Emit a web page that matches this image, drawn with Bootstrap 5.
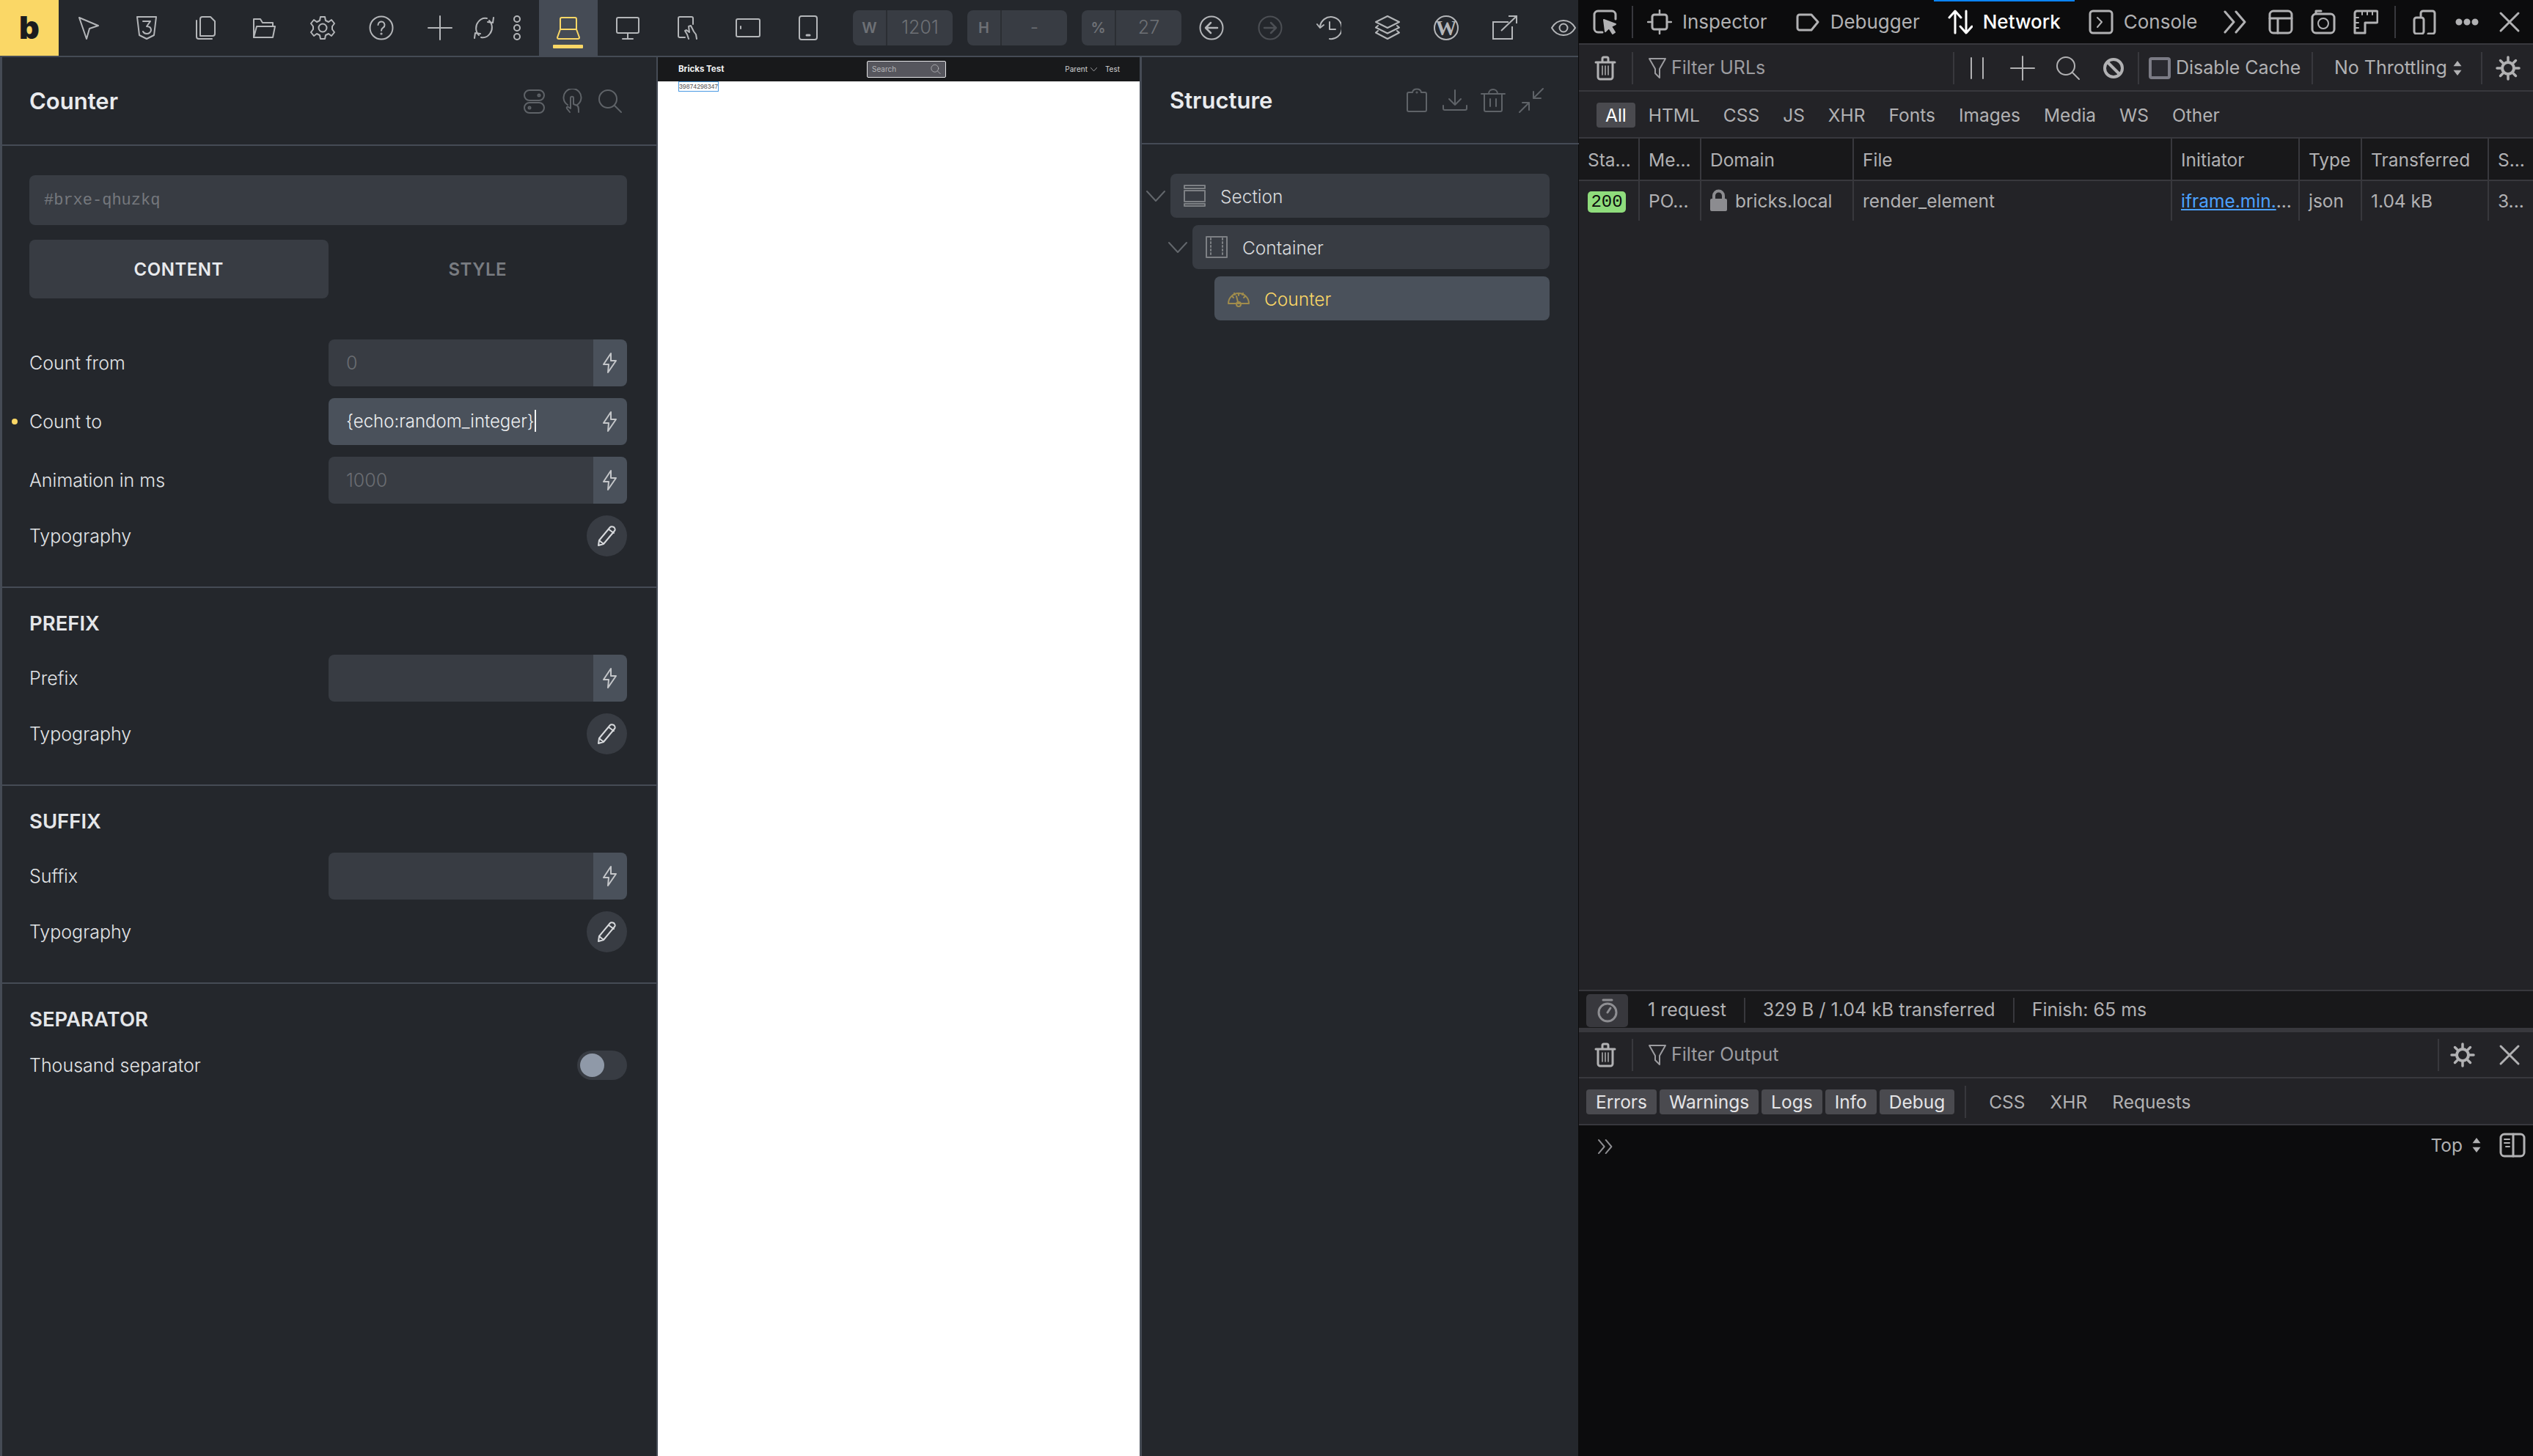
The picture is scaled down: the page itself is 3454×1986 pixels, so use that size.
<!DOCTYPE html>
<html lang="en">
<head>
<meta charset="UTF-8">
<title>Bricks builder - Counter</title>
<link href="https://cdn.jsdelivr.net/npm/bootstrap@5.3.0/dist/css/bootstrap.min.css" rel="stylesheet">
<style>
html, body { height: 100%; }
body { background: #24272c; color: #e4e6e9; font-family: Inter, "Liberation Sans", sans-serif; overflow: hidden; }
.app { width: 3454px; height: 1986px; }
.builder { width: 2153px; flex: none; border-right: 1px solid #0c0c0d; }

/* svg icons */
.ic { width: 34px; height: 34px; fill: none; stroke: currentColor; stroke-width: 2; stroke-linecap: round; stroke-linejoin: round; flex: none; display: block; }
.ic-fill { fill: currentColor; stroke: none; }

/* top bar */
.topbar { height: 78px; border-bottom: 2px solid #454b55; color: #b4b6b9; overflow: hidden; flex: none; }
.logo-box { width: 80px; height: 78px; background: #fad766; color: #1b1c1f; font: 900 43px/74px Inter, sans-serif; text-align: center; margin-bottom: -2px; flex: none; }
.tool { width: 80px; height: 76px; flex: none; }
.tool-sm { width: 40px; }
.tool-md { width: 50px; }
.tool-spacer { margin-right: 5px; }
.tool-active { background: #454b55; color: #fad766; position: relative; height: 78px; margin-bottom: -2px; }
.tool-active::after { content: ""; position: absolute; left: 19px; width: 41px; top: 61px; height: 5px; background: #fad766; border-radius: 1px; }
.tool-82 { width: 82px; }
.tool-off { color: #4c4f54; }
.size-box { width: 136px; height: 48px; background: #383c43; border-radius: 8px; margin-left: 20px; color: #6e7176; flex: none; }
.size-key { width: 47px; height: 48px; border-right: 2px solid #2b2e33; font-size: 20px; font-weight: 600; flex: none; }
.size-val { font-size: 25px; font-weight: 300; flex-grow: 1; text-align: center; }
.size-end { margin-right: 1px; }

/* builder panels */
.panel-left { width: 897px; flex: none; border-left: 3px solid #454b55; border-right: 2px solid #454b55; }
.canvas-pane { width: 657px; flex: none; background: #fff; }
.panel-right { width: 599px; flex: none; border-left: 3px solid #454b55; }
.panel-head { height: 121px; border-bottom: 2px solid #454b55; padding: 0 46px 0 37px; flex: none; }
.panel-head-r { height: 119px; padding: 0 48px 0 38px; }
.panel-title { font-size: 31px; font-weight: 600; color: #e9ebee; margin: 0; }
.head-icons { color: #5f6368; gap: 18px; }
.head-icons-r { gap: 18px; }

.sect { padding: 32px 40px 41px 37px; border-bottom: 2px solid #454b55; }
.sect-top { padding-top: 40px; }
.sect-last { border-bottom: 0; }
.sect-title { font-size: 27.5px; font-weight: 600; line-height: 32px; margin-bottom: 27px; color: #e4e6e9; }
.id-box { height: 68px; background: #383c43; border-radius: 8px; padding: 0 20px; color: #75787d; font: 22px/70px "Liberation Mono", monospace; margin-bottom: 20px; }
.tab-row { margin-bottom: 56px; }
.tab-btn { width: 408px; height: 80px; border: 0; border-radius: 8px; background: transparent; color: #797c81; font-size: 24px; font-weight: 600; letter-spacing: .5px; padding: 2px 0 0; }
.tab-on { background: #383c43; color: #e8eaed; }
.fld { min-height: 64px; margin-bottom: 16px; position: relative; }
.fld:last-child { margin-bottom: 0; }
.fld-label { font-size: 25px; font-weight: 300; color: #e2e4e7; width: 408px; flex: none; padding-top: 2px; }
.fld-dot { position: absolute; left: -24px; top: 28px; width: 8px; height: 8px; border-radius: 50%; background: #fad766; }
.fld-group { width: 407px; height: 64px; flex-wrap: nowrap; }
.fld-input, .fld-input:focus { background: #383c43; border: 0; border-radius: 8px 0 0 8px; box-shadow: none; color: #6a6d72; font-size: 25px; font-weight: 300; padding: 0 24px; height: 64px; line-height: 64px; }
.fld-input::placeholder { color: #6a6d72; opacity: 1; }
.fld-on, .fld-on:focus { background: #4a515b; color: #eceef0; white-space: nowrap; font-size: 24px; }
.caret-bar { display: inline-block; width: 2px; height: 30px; background: #f2f2f2; vertical-align: -6px; }
.fld-bolt { width: 47px; padding: 0; justify-content: center; background: #4a515b; border: 0; border-radius: 0 8px 8px 0; color: #c4c6c9; flex: none; }
.fld-bolt svg { width: 24px; height: 28px; }
.round-btn { width: 55px; height: 56px; border-radius: 50%; background: #383c43; color: #d8dadd; border: 0; padding: 0; }
.round-btn svg { width: 30px; height: 30px; }
.fld-short { min-height: 56px; }
.toggle-track { width: 68px; height: 40px; border-radius: 20px; background: #383c43; padding: 4px; }
.toggle-knob { width: 33px; height: 32px; border-radius: 50%; background: #8f99a8; }
.fld-toggle { min-height: 40px; margin: 0; }

/* canvas preview */
.site-nav { height: 33px; background: #18191b; padding: 0 27px 0 28px; color: #d4d4d6; font-size: 10px; flex: none; }
.site-brand { font-size: 11.5px; font-weight: 700; color: #f4f4f5; width: 257px; flex: none; }
.site-search { width: 108px; height: 23px; border: 1px solid #e4e4e6; border-radius: 2px; background: #56565d; padding: 0 6px; color: #b5b5b8; font-size: 10px; flex: none; }
.site-search svg { width: 14px; height: 15px; }
.site-links { font-size: 10px; gap: 11px; }
.site-links svg { width: 9px; height: 9px; }
.count-out { margin-left: 28px; width: 55px; height: 14px; border: 1px solid #4a9ae3; color: #4d4d4d; font: 8.7px/12px "Liberation Sans", sans-serif; white-space: nowrap; }

/* structure tree */
.tree { padding: 40px 40px 0 0; gap: 10px; }
.tree-line { height: 60px; }
.tree-l1 { margin-left: 30px; }
.tree-l2 { margin-left: 60px; }
.tree-chev { width: 39px; flex: none; color: #63676c; }
.tree-chev svg { width: 26px; height: 26px; margin-left: 6px; }
.tree-pill { background: #383c43; border-radius: 8px; height: 60px; flex-grow: 1; padding: 2px 18px 0; gap: 20px; font-size: 24.5px; font-weight: 300; color: #d9dbde; }
.tree-pill svg { color: #7d8084; width: 30px; height: 30px; margin-top: -2px; }
.tree-on { background: #4a515b; color: #fad766; }
.tree-on svg { color: #a08c4c; }

/* devtools */
.devtools { width: 1301px; flex: none; background: #232327; color: #b1b1b3; font-family: Inter, "Liberation Sans", sans-serif; font-size: 25px; }
.devtools .ic { width: 34px; height: 34px; }
.devtools .dt-updown { width: 12px; height: 22px; }
.devtools .dt-prompt { width: 22px; height: 22px; margin: 8px 0 0 6px; color: #8e8e92; }
.dt-tabs { height: 61px; background: #0c0c0d; border-bottom: 2px solid #38383d; flex: none; font-size: 26px; }
.dt-slot-first { width: 72px; flex: none; }
.dt-sep { width: 2px; height: 44px; background: #38383d; flex: none; }
.dt-sep-r { margin-left: 2px; }
.dt-tab { padding: 0 19px; gap: 14px; height: 59px; position: relative; }
.dt-tab-on { color: #fff; font-weight: 500; }
.dt-tab-on::before { content: ""; position: absolute; left: 0; right: 0; top: 0; height: 2px; background: #0a84ff; }
.dt-more { width: 65px; flex: none; }
.dt-58 { width: 58px; flex: none; }
.dt-tabs-end { padding-right: 3px; }
.dt-sep-m { margin: 0 10px; }
.dt-tool { height: 64px; border-bottom: 2px solid #38383d; flex: none; padding-top: 2px; }
.dt-filter { padding-left: 20px; gap: 6px; color: #9c9ca0; flex-grow: 1; }
.devtools .dt-filter svg { width: 26px; height: 30px; }
.dt-62 { width: 62px; flex: none; }
.dt-check { width: 235px; padding-left: 13px; gap: 7px; flex: none; white-space: nowrap; }
.dt-box { width: 30px; height: 30px; border: 4px solid #7b7b85; border-radius: 4px; background: #2a2a30; flex: none; }
.dt-throttle { width: 229px; padding-left: 29px; gap: 8px; flex: none; white-space: nowrap; }
.dt-gear { width: 69px; flex: none; }
.dt-types { height: 64px; border-bottom: 2px solid #38383d; padding: 2px 0 0 24px; flex: none; font-size: 24.5px; }
.dt-type { padding: 0 16px; line-height: 34px; height: 34px; border-radius: 4px; }
.dt-type-on { background: #4a4a4f; color: #fff; padding: 0 12px; margin-right: 2px; }
.dt-table { table-layout: fixed; width: 1301px; border-collapse: collapse; margin: 0; font-size: 24.5px; }
.dt-table th, .dt-table td { padding: 0 12px; border-right: 2px solid #38383d; border-bottom: 2px solid #38383d; white-space: nowrap; overflow: hidden; font-weight: 400; color: #b1b1b3; }
.dt-table th { background: #18181a; height: 57px; padding-top: 2px; }
.dt-table td { background: #232327; height: 55px; border-bottom: 0; }
.dt-table th:last-child, .dt-table td:last-child { border-right: 0; }
.c1 { width: 82px; } .c2 { width: 84px; } .c3 { width: 208px; } .c4 { width: 434px; }
.c5 { width: 174px; } .c6 { width: 85px; } .c7 { width: 173px; } .c8 { width: 61px; }
.code-200 { display: inline-block; width: 52px; height: 29px; background: #8fdc7c; color: #0c0c0d; border-radius: 5px; font: 24px/29px "Liberation Mono", monospace; text-align: center; vertical-align: middle; }
.devtools .lock-ic { width: 23px; height: 30px; vertical-align: -5px; display: inline-block; margin-right: 11px; color: #8c8c90; }
.dt-link { color: #4ba0ff; text-decoration: underline; }
.dt-net { height: 1163px; border-bottom: 2px solid #38383d; flex: none; }
.dt-status { height: 50px; background: #18181a; gap: 24px; padding: 2px 0 0 10px; flex: none; }
.dt-timer { width: 57px; height: 45px; border-radius: 5px; background: #38383d; color: #8e8e92; margin-right: 3px; }
.dt-status .dt-sep { height: 34px; }
.dt-split { height: 6px; background: #38383d; flex: none; }
.dt-con-tool { height: 63px; border-bottom: 2px solid #38383d; flex: none; padding-top: 1px; }
.dt-x { width: 64px; flex: none; }
.dt-gear-2 { width: 64px; flex: none; }
.dt-levels { height: 64px; border-bottom: 2px solid #38383d; padding: 2px 0 0 10px; gap: 4px; flex: none; font-size: 24.5px; }
.dt-level { height: 34px; line-height: 34px; padding: 0 13px; border-radius: 4px; background: #4a4a4f; color: #e4e4e6; }
.dt-levels .dt-sep { margin: 0 12px 0 10px; }
.dt-extra { padding: 0 15px; }
.dt-console { flex-grow: 1; background: #0c0c0d; padding: 10px 10px 0 19px; font-size: 24.5px; }
.dt-top { gap: 13px; line-height: 34px; }
.dt-top .dt-updown { margin-top: 6px; }
.devtools .dt-panel-ic { width: 36px; margin-left: 12px; }
</style>
</head>
<body>

<svg width="0" height="0" class="position-absolute">
  <symbol id="i-cursor" viewBox="0 0 34 34"><path d="M5 3l26 11-12 4-4 14z"/></symbol>
  <symbol id="i-css" viewBox="0 0 34 34"><path d="M4 2h26l-3 25-10 5-10-5z"/><path d="M12 8h10l-5 7c4 0 6 2 6 5s-3 5-6 5-4-1-5-3"/></symbol>
  <symbol id="i-pages" viewBox="0 0 34 34"><path d="M10 28V5a3 3 0 0 1 3-3h11l6 6v17a3 3 0 0 1-3 3z"/><path d="M5 7v22a3 3 0 0 0 3 3h18"/></symbol>
  <symbol id="i-folder" viewBox="0 0 34 34"><path d="M3 30V5h9l3 5h14v5"/><path d="M3 30l4-15h25l-3 15z"/></symbol>
  <symbol id="i-gear" viewBox="0 0 34 34"><circle cx="17" cy="17" r="5.5"/><path d="M14 2h6l1 5 4 2 4-3 4 5-3 4v4l3 4-4 5-4-3-4 2-1 5h-6l-1-5-4-2-4 3-4-5 3-4v-4l-3-4 4-5 4 3 4-2z"/></symbol>
  <symbol id="i-help" viewBox="0 0 34 34"><circle cx="17" cy="17" r="15.5"/><path d="M12.500 13a4.500 4.500 0 1 1 7 3.700c-1.500 1-2.500 2-2.500 4"/><circle cx="17" cy="25" r=".6"/></symbol>
  <symbol id="i-plus" viewBox="0 0 34 34"><path d="M17 1v32M1 17h32"/></symbol>
  <symbol id="i-sync" viewBox="0 0 34 34"><path d="M24 7c5 5 5 13 1 18-3 4-7 6-12 5"/><path d="M10 27C5 22 5 14 9 9c3-4 7-6 12-5"/><path d="M30 3l-1 7-7-1M4 31l1-7 7 1"/></symbol>
  <symbol id="i-dots" viewBox="0 0 34 34"><circle cx="17" cy="5" r="4"/><circle cx="17" cy="17" r="4"/><circle cx="17" cy="29" r="4"/></symbol>
  <symbol id="i-laptop" viewBox="0 0 34 34"><path d="M6 18V4a2 2 0 0 1 2-2h18a2 2 0 0 1 2 2v14"/><path d="M6 18h22l4 11a2 2 0 0 1-2 2H4a2 2 0 0 1-2-2z"/></symbol>
  <symbol id="i-monitor" viewBox="0 0 34 34"><rect x="2" y="3" width="30" height="21" rx="2"/><path d="M17 24v7M10 32h14"/></symbol>
  <symbol id="i-tablet-hand" viewBox="0 0 34 34"><path d="M13 30H6a2 2 0 0 1-2-2V4a2 2 0 0 1 2-2h16a2 2 0 0 1 2 2v8"/><path d="M18 32l-2-6-3-5 2-1 4 3-1-8 3-1 4 8 3 4 1 6"/></symbol>
  <symbol id="i-tablet-land" viewBox="0 0 34 34"><rect x="1" y="5" width="32" height="24" rx="2"/><path d="M7 15v3"/></symbol>
  <symbol id="i-phone" viewBox="0 0 34 34"><rect x="5" y="1" width="24" height="32" rx="3"/><path d="M15 27h4" stroke-width="3"/></symbol>
  <symbol id="i-back" viewBox="0 0 34 34"><circle cx="17" cy="17" r="15.500"/><path d="M25 17H10M16 10l-7 7 7 7" stroke-width="2.500"/></symbol>
  <symbol id="i-fwd" viewBox="0 0 34 34"><circle cx="17" cy="17" r="15.500"/><path d="M9 17h15M18 10l7 7-7 7" stroke-width="2.500"/></symbol>
  <symbol id="i-history" viewBox="0 0 34 34"><path d="M5 15a15 15 0 1 1 13 17"/><path d="M1 12l4 5 5-4"/><path d="M18 9v10h8"/></symbol>
  <symbol id="i-layers" viewBox="0 0 34 34"><path d="M17 1l16 8-16 8-16-8z"/><path d="M4 14l-3 2.500 16 8 16-8-3-2.500"/><path d="M4 21l-3 2.500 16 8.500 16-8.500-3-2.500"/></symbol>
  <symbol id="i-ext" viewBox="0 0 34 34"><path d="M22 9H1v23h26V15M12 21L33 1M22 1h11v10" stroke-linecap="butt" stroke-linejoin="miter"/></symbol>
  <symbol id="i-eye" viewBox="0 0 34 34"><path d="M1 17c4-7 10-10 16-10s12 3 16 10c-4 7-10 10-16 10S5 24 1 17z"/><circle cx="17" cy="17" r="5.500"/></symbol>
  <symbol id="i-toggles" viewBox="0 0 34 34"><rect x="4" y="2" width="27" height="14" rx="7"/><rect x="4" y="19" width="27" height="14" rx="7"/><circle cx="24" cy="9" r="1.500"/><circle cx="11" cy="26" r="1.500"/></symbol>
  <symbol id="i-touch" viewBox="0 0 34 34"><path d="M11 22a12 12 0 1 1 13 0"/><path d="M14 32l-4-5c-1-2 1-3 2-2l3 2V13c0-3 4-3 4 0v8l5 2c2 1 2 3 2 9"/></symbol>
  <symbol id="i-search" viewBox="0 0 34 34"><circle cx="14" cy="14" r="12"/><path d="M23 23l9 9"/></symbol>
  <symbol id="i-clip" viewBox="0 0 34 34"><path d="M11 6H6a2 2 0 0 0-2 2v22a2 2 0 0 0 2 2h22a2 2 0 0 0 2-2V8a2 2 0 0 0-2-2h-5c-1-6-11-6-12 0z"/><circle cx="17" cy="6" r=".6"/></symbol>
  <symbol id="i-down" viewBox="0 0 34 34"><path d="M17 3v20M9 15l8 8 8-8M1 24v4a2 2 0 0 0 2 2h28a2 2 0 0 0 2-2v-4"/></symbol>
  <symbol id="i-trash" viewBox="0 0 34 34"><path d="M1 8h32M5 8v22a2 2 0 0 0 2 2h20a2 2 0 0 0 2-2V8M11 8c0-8 12-8 12 0M13 15v10M21 15v10"/></symbol>
  <symbol id="i-collapse" viewBox="0 0 34 34"><path d="M33 1L20 14M20 5v9h10M1 33l13-13M5 20h9v10"/></symbol>
  <symbol id="i-bolt" viewBox="0 0 24 28"><path d="M13 1L3 16h7l-1 11 11-16h-7z"/></symbol>
  <symbol id="i-pen" viewBox="0 0 30 30"><path d="M4 21L19 3c1-1 3-1 5 0 2 2 2 4 1 5L10 26l-7 2zM4 21l6 5M17 6l7 5"/></symbol>
  <symbol id="i-chev" viewBox="0 0 26 26"><path d="M1 7l12 13L25 7"/></symbol>
  <symbol id="i-section" viewBox="0 0 30 30"><rect x="1" y="1" width="28" height="4"/><rect x="1" y="8" width="28" height="15"/><rect x="1" y="26" width="28" height="3"/></symbol>
  <symbol id="i-container" viewBox="0 0 30 30"><rect x="1" y="1" width="28" height="28"/><path d="M7 3v25M23 3v25" stroke-dasharray="2 3"/></symbol>
  <symbol id="i-gauge" viewBox="0 0 30 30"><path d="M1 22a14 14 0 0 1 28 0zM15 8v3M6 12l2 2M24 12l-2 2M9 8l1 2M21 8l-1 2M12 12l2 8"/><circle cx="15" cy="23" r="3"/></symbol>
  <symbol id="i-pick" viewBox="0 0 34 34"><path d="M13 31H7a5 5 0 0 1-5-5V7a5 5 0 0 1 5-5h19a5 5 0 0 1 5 5v6" stroke-width="3"/><path d="M15 14l16 6-6 3 5 8-3 2-5-8-5 5z" fill="currentColor"/></symbol>
  <symbol id="i-node" viewBox="0 0 34 34"><rect x="7" y="7" width="20" height="20" rx="3" stroke-width="3"/><path d="M17 1v6M17 27v6M1 17h6M27 17h6" stroke-width="2.500"/></symbol>
  <symbol id="i-debug" viewBox="0 0 34 34"><path d="M3 10a3 3 0 0 1 3-3h16l9 10-9 11H6a3 3 0 0 1-3-3z" stroke-width="3"/></symbol>
  <symbol id="i-net" viewBox="0 0 34 34"><path d="M10 32V3M2 11l8-9 8 9M25 2v29M17 23l8 9 8-9" stroke-width="3"/></symbol>
  <symbol id="i-console" viewBox="0 0 34 34"><rect x="2" y="2" width="30" height="30" rx="4" stroke-width="3"/><path d="M12 11l6 6-6 7"/></symbol>
  <symbol id="i-more" viewBox="0 0 34 34"><path d="M3 3l12 14L3 31M18 3l12 14-12 14" stroke-width="3"/></symbol>
  <symbol id="i-layout" viewBox="0 0 34 34"><rect x="2" y="2" width="30" height="30" rx="5" stroke-width="3"/><path d="M2 12h30M13 12v20" stroke-width="3"/></symbol>
  <symbol id="i-camera" viewBox="0 0 34 34"><rect x="2" y="6" width="30" height="26" rx="5" stroke-width="3"/><circle cx="17" cy="19" r="7"/><path d="M7 5V2h7" stroke-width="3"/></symbol>
  <symbol id="i-ruler" viewBox="0 0 34 34"><path d="M2 32V5a3 3 0 0 1 3-3h26a2 2 0 0 1 2 2v12a2 2 0 0 1-2 2H16v14z" stroke-width="3"/><path d="M12 3v4M19 3v4M26 3v4M3 11h4M3 18h4M3 25h4"/></symbol>
  <symbol id="i-resp" viewBox="0 0 34 34"><path d="M12 9V5a3 3 0 0 1 3-3h13a3 3 0 0 1 3 3v25a3 3 0 0 1-3 3h-6" stroke-width="3"/><rect x="3" y="11" width="13" height="22" rx="3" stroke-width="3"/></symbol>
  <symbol id="i-hdots" viewBox="0 0 34 34"><circle cx="6" cy="17" r="3.500" fill="currentColor"/><circle cx="17" cy="17" r="3.500" fill="currentColor"/><circle cx="28" cy="17" r="3.500" fill="currentColor"/></symbol>
  <symbol id="i-close" viewBox="0 0 34 34"><path d="M5 5l24 24M29 5L5 29" stroke-width="3"/></symbol>
  <symbol id="i-dt-trash" viewBox="0 0 34 34"><path d="M4 9h26M7 9v20a3 3 0 0 0 3 3h14a3 3 0 0 0 3-3V9M13 8V4a2 2 0 0 1 2-2h4a2 2 0 0 1 2 2v4" stroke-width="3"/><path d="M13 14v12M17 14v12M21 14v12" stroke-width="1.500"/></symbol>
  <symbol id="i-funnel" viewBox="0 0 26 30"><path d="M2 2h22l-8 14v12l-6-6v-6z"/></symbol>
  <symbol id="i-pause" viewBox="0 0 34 34"><path d="M9 3v28M25 3v28"/></symbol>
  <symbol id="i-block" viewBox="0 0 34 34"><circle cx="17" cy="17" r="12" stroke-width="4"/><path d="M9 9l16 16" stroke-width="4"/></symbol>
  <symbol id="i-sun" viewBox="0 0 34 34"><circle cx="17" cy="17" r="8" stroke-width="4"/><path d="M17 2v6M17 26v6M2 17h6M26 17h6M6.500 6.500l4 4M23.500 23.500l4 4M6.500 27.500l4-4M23.500 10.500l4-4" stroke-width="3.500"/></symbol>
  <symbol id="i-timer" viewBox="0 0 34 34"><circle cx="17" cy="20" r="12" stroke-width="3"/><path d="M11 3h12M17 20l4-6" stroke-width="3"/></symbol>
  <symbol id="i-ud" viewBox="0 0 12 24"><path d="M6 1l6 8H0zM6 23l6-8H0z"/></symbol>
  <symbol id="i-lock" viewBox="0 0 23 30"><path fill-rule="evenodd" d="M0 15a2 2 0 0 1 2-2h1V9a8.500 8.500 0 0 1 17 0v4h1a2 2 0 0 1 2 2v13a2 2 0 0 1-2 2H2a2 2 0 0 1-2-2zM7 13h9V9a4.500 4.500 0 0 0-9 0z"/></symbol>
  <symbol id="i-split" viewBox="0 0 36 34"><rect x="2" y="2" width="32" height="30" rx="5" stroke-width="3"/><path d="M19 2v30" stroke-width="3"/><path d="M7 9h7M7 14h7M9 19h5"/></symbol>
</svg>

<div class="app d-flex">

  <div class="builder d-flex flex-column">
    <div class="topbar d-flex align-items-center">
      <div class="logo-box">b</div>
      <div class="tool d-flex align-items-center justify-content-center"><svg class="ic"><use href="#i-cursor"/></svg></div>
      <div class="tool d-flex align-items-center justify-content-center"><svg class="ic"><use href="#i-css"/></svg></div>
      <div class="tool d-flex align-items-center justify-content-center"><svg class="ic"><use href="#i-pages"/></svg></div>
      <div class="tool d-flex align-items-center justify-content-center"><svg class="ic"><use href="#i-folder"/></svg></div>
      <div class="tool d-flex align-items-center justify-content-center"><svg class="ic"><use href="#i-gear"/></svg></div>
      <div class="tool d-flex align-items-center justify-content-center"><svg class="ic"><use href="#i-help"/></svg></div>
      <div class="tool d-flex align-items-center justify-content-center"><svg class="ic"><use href="#i-plus"/></svg></div>
      <div class="tool tool-sm d-flex align-items-center justify-content-center"><svg class="ic"><use href="#i-sync"/></svg></div>
      <div class="tool tool-md tool-spacer d-flex align-items-center justify-content-center"><svg class="ic"><use href="#i-dots"/></svg></div>
      <div class="tool tool-active d-flex align-items-center justify-content-center"><svg class="ic"><use href="#i-laptop"/></svg></div>
      <div class="tool tool-82 d-flex align-items-center justify-content-center"><svg class="ic"><use href="#i-monitor"/></svg></div>
      <div class="tool tool-82 d-flex align-items-center justify-content-center"><svg class="ic"><use href="#i-tablet-hand"/></svg></div>
      <div class="tool tool-82 d-flex align-items-center justify-content-center"><svg class="ic"><use href="#i-tablet-land"/></svg></div>
      <div class="tool tool-82 d-flex align-items-center justify-content-center"><svg class="ic"><use href="#i-phone"/></svg></div>
      <div class="size-box d-flex align-items-center"><div class="size-key d-flex align-items-center justify-content-center">W</div><div class="size-val">1201</div></div>
      <div class="size-box d-flex align-items-center"><div class="size-key d-flex align-items-center justify-content-center">H</div><div class="size-val">-</div></div>
      <div class="size-box size-end d-flex align-items-center"><div class="size-key d-flex align-items-center justify-content-center">%</div><div class="size-val">27</div></div>
      <div class="tool d-flex align-items-center justify-content-center"><svg class="ic"><use href="#i-back"/></svg></div>
      <div class="tool tool-off d-flex align-items-center justify-content-center"><svg class="ic"><use href="#i-fwd"/></svg></div>
      <div class="tool d-flex align-items-center justify-content-center"><svg class="ic"><use href="#i-history"/></svg></div>
      <div class="tool d-flex align-items-center justify-content-center"><svg class="ic"><use href="#i-layers"/></svg></div>
      <div class="tool d-flex align-items-center justify-content-center">
        <svg class="ic" viewBox="0 0 34 34"><circle cx="17" cy="17" r="16"/><text x="17" y="27" text-anchor="middle" font-family="Liberation Serif, serif" font-weight="700" font-size="29" fill="currentColor" stroke="none">W</text></svg>
      </div>
      <div class="tool d-flex align-items-center justify-content-center"><svg class="ic"><use href="#i-ext"/></svg></div>
      <div class="tool d-flex align-items-center justify-content-center"><svg class="ic"><use href="#i-eye"/></svg></div>
    </div>

    <div class="d-flex flex-grow-1">
      <div class="panel-left d-flex flex-column">
        <div class="panel-head d-flex align-items-center justify-content-between">
          <h1 class="panel-title">Counter</h1>
          <div class="head-icons d-flex">
            <svg class="ic"><use href="#i-toggles"/></svg>
            <svg class="ic"><use href="#i-touch"/></svg>
            <svg class="ic"><use href="#i-search"/></svg>
          </div>
        </div>

        <div class="sect sect-top">
          <div class="id-box">#brxe-qhuzkq</div>
          <div class="tab-row d-flex">
            <button class="tab-btn tab-on">CONTENT</button>
            <button class="tab-btn">STYLE</button>
          </div>
          <div class="fld d-flex align-items-center">
            <div class="fld-label">Count from</div>
            <div class="input-group fld-group">
              <input class="form-control fld-input" placeholder="0">
              <span class="input-group-text fld-bolt"><svg class="ic"><use href="#i-bolt"/></svg></span>
            </div>
          </div>
          <div class="fld d-flex align-items-center">
            <span class="fld-dot"></span>
            <div class="fld-label">Count to</div>
            <div class="input-group fld-group">
              <div class="form-control fld-input fld-on">{echo:random_integer}<span class="caret-bar"></span></div>
              <span class="input-group-text fld-bolt"><svg class="ic"><use href="#i-bolt"/></svg></span>
            </div>
          </div>
          <div class="fld d-flex align-items-center">
            <div class="fld-label">Animation in ms</div>
            <div class="input-group fld-group">
              <input class="form-control fld-input" placeholder="1000">
              <span class="input-group-text fld-bolt"><svg class="ic"><use href="#i-bolt"/></svg></span>
            </div>
          </div>
          <div class="fld fld-short d-flex align-items-center justify-content-between">
            <div class="fld-label">Typography</div>
            <button class="round-btn d-flex align-items-center justify-content-center"><svg class="ic"><use href="#i-pen"/></svg></button>
          </div>
        </div>

        <div class="sect">
          <div class="sect-title">PREFIX</div>
          <div class="fld d-flex align-items-center">
            <div class="fld-label">Prefix</div>
            <div class="input-group fld-group">
              <input class="form-control fld-input">
              <span class="input-group-text fld-bolt"><svg class="ic"><use href="#i-bolt"/></svg></span>
            </div>
          </div>
          <div class="fld fld-short d-flex align-items-center justify-content-between">
            <div class="fld-label">Typography</div>
            <button class="round-btn d-flex align-items-center justify-content-center"><svg class="ic"><use href="#i-pen"/></svg></button>
          </div>
        </div>

        <div class="sect">
          <div class="sect-title">SUFFIX</div>
          <div class="fld d-flex align-items-center">
            <div class="fld-label">Suffix</div>
            <div class="input-group fld-group">
              <input class="form-control fld-input">
              <span class="input-group-text fld-bolt"><svg class="ic"><use href="#i-bolt"/></svg></span>
            </div>
          </div>
          <div class="fld fld-short d-flex align-items-center justify-content-between">
            <div class="fld-label">Typography</div>
            <button class="round-btn d-flex align-items-center justify-content-center"><svg class="ic"><use href="#i-pen"/></svg></button>
          </div>
        </div>

        <div class="sect sect-last">
          <div class="sect-title">SEPARATOR</div>
          <div class="fld fld-toggle d-flex align-items-center justify-content-between">
            <div class="fld-label">Thousand separator</div>
            <div class="toggle-track"><div class="toggle-knob"></div></div>
          </div>
        </div>
      </div>

      <div class="canvas-pane d-flex flex-column">
        <div class="site-nav d-flex align-items-center">
          <div class="site-brand">Bricks Test</div>
          <div class="site-search d-flex align-items-center justify-content-between">Search <svg class="ic"><use href="#i-search"/></svg></div>
          <div class="site-links d-flex align-items-center ms-auto">
            <span class="d-flex align-items-center gap-1">Parent <svg class="ic"><use href="#i-chev"/></svg></span>
            <span>Test</span>
          </div>
        </div>
        <div class="count-out">39874298347</div>
      </div>

      <div class="panel-right d-flex flex-column">
        <div class="panel-head panel-head-r d-flex align-items-center justify-content-between">
          <h2 class="panel-title">Structure</h2>
          <div class="head-icons head-icons-r d-flex">
            <svg class="ic"><use href="#i-clip"/></svg>
            <svg class="ic"><use href="#i-down"/></svg>
            <svg class="ic"><use href="#i-trash"/></svg>
            <svg class="ic"><use href="#i-collapse"/></svg>
          </div>
        </div>
        <div class="tree d-flex flex-column">
          <div class="tree-line d-flex align-items-center">
            <div class="tree-chev"><svg class="ic"><use href="#i-chev"/></svg></div>
            <div class="tree-pill d-flex align-items-center"><svg class="ic"><use href="#i-section"/></svg>Section</div>
          </div>
          <div class="tree-line tree-l1 d-flex align-items-center">
            <div class="tree-chev"><svg class="ic"><use href="#i-chev"/></svg></div>
            <div class="tree-pill d-flex align-items-center"><svg class="ic"><use href="#i-container"/></svg>Container</div>
          </div>
          <div class="tree-line tree-l2 d-flex align-items-center">
            <div class="tree-chev"></div>
            <div class="tree-pill tree-on d-flex align-items-center"><svg class="ic"><use href="#i-gauge"/></svg>Counter</div>
          </div>
        </div>
      </div>
    </div>
  </div>

  <div class="devtools d-flex flex-column">
    <div class="dt-tabs d-flex align-items-center">
      <div class="dt-slot-first d-flex justify-content-center"><svg class="ic"><use href="#i-pick"/></svg></div>
      <div class="dt-sep"></div>
      <div class="dt-tab d-flex align-items-center"><svg class="ic"><use href="#i-node"/></svg>Inspector</div>
      <div class="dt-tab d-flex align-items-center"><svg class="ic"><use href="#i-debug"/></svg>Debugger</div>
      <div class="dt-tab dt-tab-on d-flex align-items-center"><svg class="ic"><use href="#i-net"/></svg>Network</div>
      <div class="dt-tab d-flex align-items-center"><svg class="ic"><use href="#i-console"/></svg>Console</div>
      <div class="dt-more d-flex justify-content-center"><svg class="ic"><use href="#i-more"/></svg></div>
      <div class="dt-tabs-end d-flex align-items-center ms-auto">
        <div class="dt-58 d-flex justify-content-center"><svg class="ic"><use href="#i-layout"/></svg></div>
        <div class="dt-58 d-flex justify-content-center"><svg class="ic"><use href="#i-camera"/></svg></div>
        <div class="dt-58 d-flex justify-content-center"><svg class="ic"><use href="#i-ruler"/></svg></div>
        <div class="dt-sep dt-sep-m"></div>
        <div class="dt-58 d-flex justify-content-center"><svg class="ic"><use href="#i-resp"/></svg></div>
        <div class="dt-58 d-flex justify-content-center"><svg class="ic"><use href="#i-hdots"/></svg></div>
        <div class="dt-58 d-flex justify-content-center"><svg class="ic"><use href="#i-close"/></svg></div>
      </div>
    </div>

    <div class="dt-tool d-flex align-items-center">
      <div class="dt-slot-first d-flex justify-content-center"><svg class="ic"><use href="#i-dt-trash"/></svg></div>
      <div class="dt-sep"></div>
      <div class="dt-filter d-flex align-items-center"><svg class="ic"><use href="#i-funnel"/></svg>Filter URLs</div>
      <div class="dt-sep"></div>
      <div class="dt-62 d-flex justify-content-center"><svg class="ic"><use href="#i-pause"/></svg></div>
      <div class="dt-62 d-flex justify-content-center"><svg class="ic"><use href="#i-plus"/></svg></div>
      <div class="dt-62 d-flex justify-content-center"><svg class="ic"><use href="#i-search"/></svg></div>
      <div class="dt-62 d-flex justify-content-center"><svg class="ic"><use href="#i-block"/></svg></div>
      <div class="dt-sep dt-sep-r"></div>
      <div class="dt-check d-flex align-items-center"><span class="dt-box"></span>Disable Cache</div>
      <div class="dt-sep"></div>
      <div class="dt-throttle d-flex align-items-center">No Throttling <svg class="ic dt-updown ic-fill"><use href="#i-ud"/></svg></div>
      <div class="dt-sep"></div>
      <div class="dt-gear d-flex justify-content-center"><svg class="ic"><use href="#i-sun"/></svg></div>
    </div>

    <div class="dt-types d-flex align-items-center">
      <div class="dt-type dt-type-on">All</div>
      <div class="dt-type">HTML</div>
      <div class="dt-type">CSS</div>
      <div class="dt-type">JS</div>
      <div class="dt-type">XHR</div>
      <div class="dt-type">Fonts</div>
      <div class="dt-type">Images</div>
      <div class="dt-type">Media</div>
      <div class="dt-type">WS</div>
      <div class="dt-type">Other</div>
    </div>

    <div class="dt-net">
      <table class="dt-table">
        <colgroup><col class="c1"><col class="c2"><col class="c3"><col class="c4"><col class="c5"><col class="c6"><col class="c7"><col class="c8"></colgroup>
        <thead>
          <tr><th>Sta...</th><th>Me...</th><th>Domain</th><th>File</th><th>Initiator</th><th>Type</th><th>Transferred</th><th>S...</th></tr>
        </thead>
        <tbody>
          <tr>
            <td><span class="code-200">200</span></td>
            <td>PO...</td>
            <td><svg class="ic ic-fill lock-ic"><use href="#i-lock"/></svg>bricks.local</td>
            <td>render_element</td>
            <td><span class="dt-link">iframe.min.</span>...</td>
            <td>json</td>
            <td>1.04 kB</td>
            <td>3...</td>
          </tr>
        </tbody>
      </table>
    </div>

    <div class="dt-status d-flex align-items-center">
      <div class="dt-timer d-flex align-items-center justify-content-center"><svg class="ic"><use href="#i-timer"/></svg></div>
      <span>1 request</span>
      <div class="dt-sep"></div>
      <span>329 B / 1.04 kB transferred</span>
      <div class="dt-sep"></div>
      <span>Finish: 65 ms</span>
    </div>
    <div class="dt-split"></div>

    <div class="dt-con-tool d-flex align-items-center">
      <div class="dt-slot-first d-flex justify-content-center"><svg class="ic"><use href="#i-dt-trash"/></svg></div>
      <div class="dt-sep"></div>
      <div class="dt-filter d-flex align-items-center"><svg class="ic"><use href="#i-funnel"/></svg>Filter Output</div>
      <div class="dt-sep"></div>
      <div class="dt-gear-2 d-flex justify-content-center"><svg class="ic"><use href="#i-sun"/></svg></div>
      <div class="dt-x d-flex justify-content-center"><svg class="ic"><use href="#i-close"/></svg></div>
    </div>

    <div class="dt-levels d-flex align-items-center">
      <div class="dt-level">Errors</div>
      <div class="dt-level">Warnings</div>
      <div class="dt-level">Logs</div>
      <div class="dt-level">Info</div>
      <div class="dt-level">Debug</div>
      <div class="dt-sep"></div>
      <div class="dt-extra">CSS</div>
      <div class="dt-extra">XHR</div>
      <div class="dt-extra">Requests</div>
    </div>

    <div class="dt-console d-flex justify-content-between">
      <svg class="ic dt-prompt"><use href="#i-more"/></svg>
      <div class="dt-top d-flex align-items-start">
        <span>Top</span>
        <svg class="ic dt-updown ic-fill"><use href="#i-ud"/></svg>
        <svg class="ic dt-panel-ic"><use href="#i-split"/></svg>
      </div>
    </div>
  </div>
</div>

<script src="https://cdn.jsdelivr.net/npm/bootstrap@5.3.0/dist/js/bootstrap.bundle.min.js"></script>
</body>
</html>
